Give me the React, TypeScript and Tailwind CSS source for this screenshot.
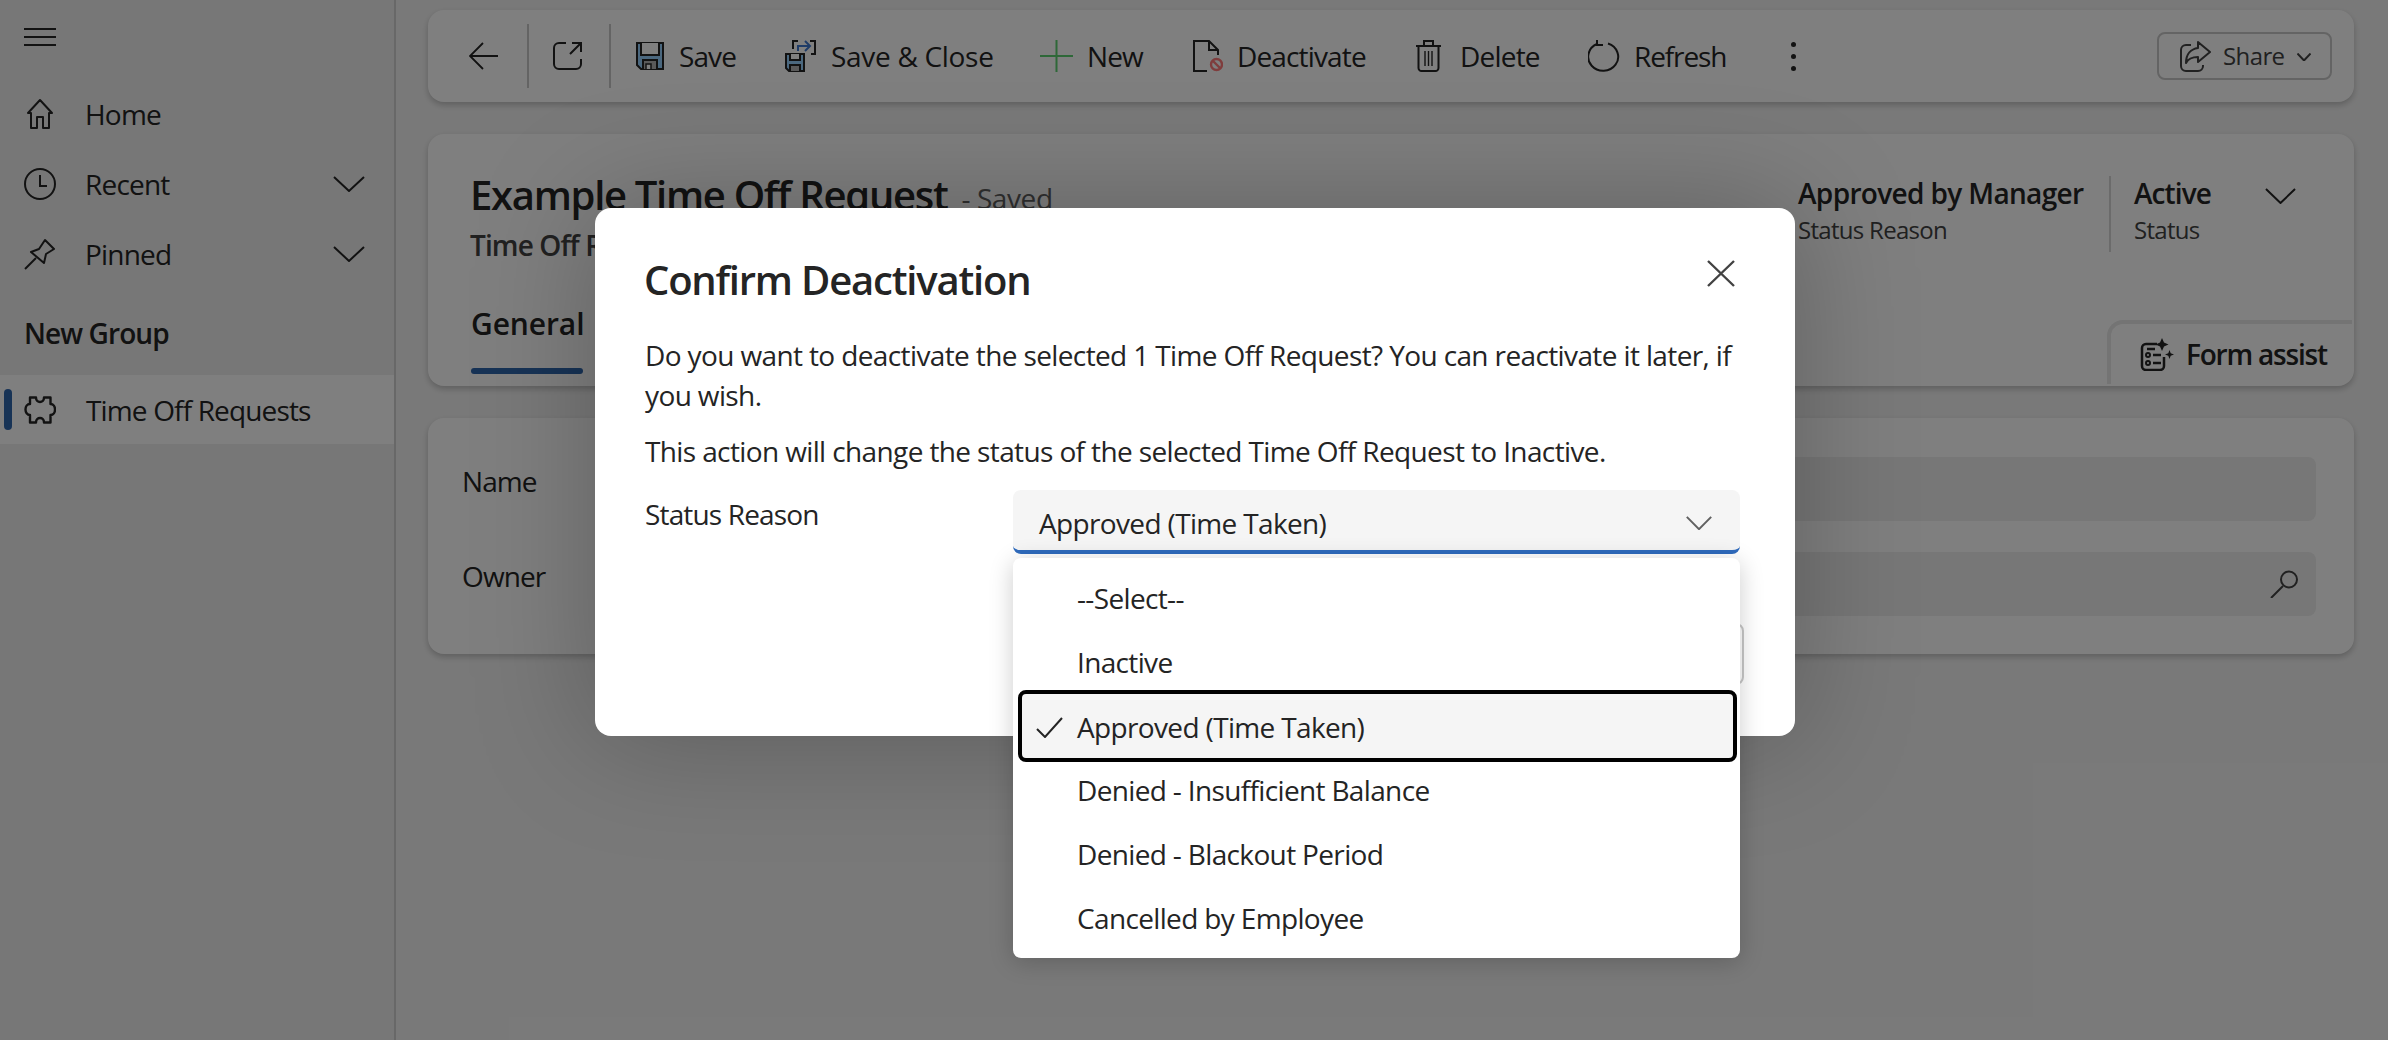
import type { ReactNode } from 'react';

const ink = '#242424';

function Chevron({ className }: { className: string }) {
  return (
    <svg viewBox="0 0 32 16" fill="none" stroke="currentColor" strokeWidth="2" preserveAspectRatio="none" className={className}>
      <path d="M1 1 16 15 31 1" vectorEffect="non-scaling-stroke" />
    </svg>
  );
}

const homeIcon = (
  <svg viewBox="0 0 32 32" fill="none" stroke={ink} strokeWidth="2" className="h-[32px] w-[32px]">
    <path d="M4 15 16 2l12 13h-3v15h-6V19h-6v11H7V15Z" strokeLinejoin="round" />
  </svg>
);
const clockIcon = (
  <svg viewBox="0 0 32 32" fill="none" stroke={ink} strokeWidth="2" className="h-[32px] w-[32px]">
    <circle cx="16" cy="16" r="15" />
    <path d="M16 7v11h7" />
  </svg>
);
const pinIcon = (
  <svg viewBox="0 0 32 32" fill="none" stroke={ink} strokeWidth="2" className="h-[32px] w-[32px]">
    <path d="M21 2 30 11 22 16 20 25 7 14l8-3 6-9Z" strokeLinejoin="round" />
    <path d="M12 20 1 31" />
  </svg>
);
const puzzleIcon = (
  <svg viewBox="0 0 32 28" fill="none" stroke={ink} strokeWidth="2.400" className="h-[28px] w-[32px]">
    <path d="M6 1.500h6c0 6 8 6 8 0h6.500V8c6 0 6 11 0 11v7.500H20c0-6-8-6-8 0H6V19c-6 0-6-11 0-11V1.500Z" strokeLinejoin="round" />
  </svg>
);

const navItems = [
  { label: 'Home', icon: homeIcon, chevron: false },
  { label: 'Recent', icon: clockIcon, chevron: true },
  { label: 'Pinned', icon: pinIcon, chevron: true },
];

const saveIcon = (
  <svg viewBox="0 0 28 28" stroke={ink} strokeWidth="2" fill="none" className="h-[28px] w-[28px]">
    <path d="M1 1h26v26H5l-4-4V1Z" fill="#97d0ff" />
    <path d="M5 1v12h18V1" fill="#ffffff" />
    <path d="M7 27V18h14v9" fill="#b4b4b4" />
    <path d="M10 27v-5h5v5" fill="#ffffff" strokeWidth="1.500" />
  </svg>
);
const saveCloseIcon = (
  <svg viewBox="0 0 31 32" stroke={ink} strokeWidth="2" fill="none" className="h-[32px] w-[31px]">
    <path d="M1 14h18v17H4l-3-3V14Z" fill="#97d0ff" />
    <path d="M5 14v6h10v-6" fill="#ffffff" />
    <path d="M5 31v-6h10v6" fill="#b4b4b4" />
    <path d="M8 9V1h5M25 1h5v13h-4" />
    <path d="M13 11V6h12M20 1l5 5-5 5" stroke="#3f78d0" />
  </svg>
);
const plusIcon = (
  <svg viewBox="0 0 33 32" stroke="#5cd070" strokeWidth="2" fill="none" className="h-[32px] w-[33px]">
    <path d="M16.500 0v32M0 16h33" />
  </svg>
);
const deactivateIcon = (
  <svg viewBox="0 0 30 32" stroke={ink} strokeWidth="2" fill="none" className="h-[32px] w-[30px]">
    <path d="M14 31H1V1h15l9 9v5M16 1v9h9" />
    <circle cx="23.500" cy="24.500" r="5.500" stroke="#ff7a7a" strokeWidth="2.400" />
    <path d="m19.500 20.500 8 8" stroke="#ff7a7a" strokeWidth="2.400" />
  </svg>
);
const deleteIcon = (
  <svg viewBox="0 0 25 32" stroke={ink} strokeWidth="2" fill="none" className="h-[32px] w-[25px]">
    <path d="M8 5V1h9v4M0 6h25M2.500 6v22a3 3 0 0 0 3 3h14a3 3 0 0 0 3-3V6" />
    <path d="M9 11v15M12.500 11v15M16 11v15" strokeWidth="1.400" />
  </svg>
);
const refreshIcon = (
  <svg viewBox="0 0 33 32" stroke={ink} strokeWidth="2" fill="none" className="h-[32px] w-[33px]">
    <path d="M20 3.500A15 14 0 1 1 9 4" />
    <path d="M9 0v5h6" />
  </svg>
);

const commands = [
  { label: 'Save', width: 'w-[58px]', ml: 'ml-[25px]', gap: 'gap-[15px]', tracking: 'tracking-[-0.9px]', icon: saveIcon },
  { label: 'Save & Close', width: 'w-[161px]', ml: 'ml-[48px]', gap: 'gap-[15px]', tracking: 'tracking-[-0.3px]', icon: saveCloseIcon },
  { label: 'New', width: 'w-[55px]', ml: 'ml-[48px]', gap: 'gap-[14px]', tracking: 'tracking-[-0.9px]', icon: plusIcon },
  { label: 'Deactivate', width: 'w-[129px]', ml: 'ml-[51px]', gap: 'gap-[14px]', tracking: 'tracking-[-0.85px]', icon: deactivateIcon },
  { label: 'Delete', width: 'w-[79px]', ml: 'ml-[50px]', gap: 'gap-[19px]', tracking: 'tracking-[-0.8px]', icon: deleteIcon },
  { label: 'Refresh', width: 'w-[91px]', ml: 'ml-[49px]', gap: 'gap-[13px]', tracking: 'tracking-[-1.1px]', icon: refreshIcon },
];

const options = ['--Select--', 'Inactive', 'Approved (Time Taken)', 'Denied - Insufficient Balance', 'Denied - Blackout Period', 'Cancelled by Employee'];

function Sidebar() {
  return (
    <aside className="flex h-full w-[396px] shrink-0 flex-col border-r-2 border-[#d0d0d0] bg-[#eeeeee]">
      <div className="pl-[24px] pt-[28px]">
        <svg viewBox="0 0 32 18" stroke={ink} strokeWidth="2" className="h-[18px] w-[32px]">
          <path d="M0 1h32M0 9h32M0 17h32" />
        </svg>
      </div>
      <nav className="mt-[48px] flex flex-col gap-[30px]">
        {navItems.map((item) => (
          <div key={item.label} className="flex h-[40px] items-center pl-[24px] pr-[29px]">
            {item.icon}
            <span className="ml-[29px] flex-1 text-[28px] leading-[40px] tracking-[-0.8px]">{item.label}</span>
            {item.chevron && <Chevron className="h-[16px] w-[32px]" />}
          </div>
        ))}
      </nav>
      <div className="mt-[39px] pl-[24px] text-[28px] font-semibold leading-[40px] tracking-[-0.9px]">New Group</div>
      <div className="mt-[22px] flex h-[69px] items-center bg-white">
        <div className="ml-[4px] h-[41px] w-[8px] rounded-full bg-[#2f66ad]" />
        <div className="ml-[12px] flex">{puzzleIcon}</div>
        <span className="ml-[30px] text-[28px] leading-[40px] tracking-[-0.85px]">Time Off Requests</span>
      </div>
    </aside>
  );
}

function CommandBar() {
  return (
    <div className="flex h-[92px] items-center rounded-[16px] bg-white pl-[41px] pr-[22px] shadow-[0_3px_6px_rgba(0,0,0,0.22)]">
      <svg viewBox="0 0 29 28" stroke={ink} strokeWidth="1.800" fill="none" className="h-[28px] w-[29px]">
        <path d="M29 14H2M14 1 1 14l13 13" />
      </svg>
      <div className="ml-[29px] h-[64px] w-[2px] bg-[#c8c8c8]" />
      <svg viewBox="0 0 30 28" stroke={ink} strokeWidth="2" fill="none" className="ml-[24px] h-[28px] w-[30px]">
        <path d="M13 1H6a5 5 0 0 0-5 5v16a5 5 0 0 0 5 5h17a5 5 0 0 0 5-5V17" />
        <path d="M17 12 28 1M19 1h9v9" />
      </svg>
      <div className="ml-[26px] h-[64px] w-[2px] bg-[#c8c8c8]" />
      {commands.map((c) => (
        <div key={c.label} className={`flex items-center ${c.ml} ${c.gap}`}>
          {c.icon}
          <span className={`${c.width} ${c.tracking} whitespace-nowrap text-[28px] leading-[40px]`}>{c.label}</span>
        </div>
      ))}
      <div className="ml-[66px] flex flex-col gap-[7px]">
        <div className="h-[5px] w-[5px] rounded-full bg-[#242424]" />
        <div className="h-[5px] w-[5px] rounded-full bg-[#242424]" />
        <div className="h-[5px] w-[5px] rounded-full bg-[#242424]" />
      </div>
      <div className="ml-auto flex h-[48px] w-[175px] items-center rounded-[8px] border-2 border-[#c8c8c8] pl-[21px] text-[#424242]">
        <svg viewBox="0 0 31 32" stroke="#424242" strokeWidth="2" fill="none" className="h-[32px] w-[31px]">
          <path d="M11 5H6a5 5 0 0 0-5 5v16a5 5 0 0 0 5 5h12a5 5 0 0 0 5-5v-1" />
          <path d="M18 2 30 12 18 22v-5c-6 0-10 2-12 6 0-9 5-14 12-15V2Z" strokeLinejoin="round" />
        </svg>
        <span className="ml-[12px] text-[24px] leading-[32px] tracking-[-0.6px]">Share</span>
        <Chevron className="ml-[12px] mt-[2px] h-[8px] w-[14px]" />
      </div>
    </div>
  );
}

function HeaderCard() {
  return (
    <div className="flex h-[252px] justify-between rounded-[16px] bg-white pl-[42px] shadow-[0_3px_6px_rgba(0,0,0,0.22)]">
      <div className="pt-[35px]">
        <div className="flex items-baseline whitespace-nowrap">
          <span className="text-[40px] font-semibold leading-[52px] tracking-[-1.3px]">Example Time Off Request</span>
          <span className="ml-[14px] -translate-y-[1px] text-[28px] tracking-[-0.4px] text-[#616161]">- Saved</span>
        </div>
        <div className="mt-[4px] text-[28px] font-semibold leading-[40px] tracking-[-0.9px] text-[#424242]">Time Off Request</div>
        <div className="ml-[1px] mt-[39px] text-[30px] font-semibold leading-[40px] tracking-[-0.1px]">General</div>
        <div className="ml-[1px] mt-[24px] h-[6px] w-[112px] rounded-full bg-[#2f66ad]" />
      </div>
      <div className="flex flex-col items-end justify-between pb-[2px] pr-[2px] pt-[40px]">
        <div className="mr-[56px] flex items-start">
          <div className="w-[284px] whitespace-nowrap">
            <div className="text-[28px] font-semibold leading-[38px] tracking-[-0.65px]">Approved by Manager</div>
            <div className="text-[24px] leading-[36px] tracking-[-0.7px] text-[#424242]">Status Reason</div>
          </div>
          <div className="ml-[27px] mt-[2px] h-[76px] w-[2px] bg-[#d6d6d6]" />
          <div className="ml-[23px] w-[131px]">
            <div className="text-[28px] font-semibold leading-[38px] tracking-[-0.9px]">Active</div>
            <div className="text-[24px] leading-[36px] tracking-[-0.7px] text-[#424242]">Status</div>
          </div>
          <Chevron className="mt-[14px] h-[16px] w-[31px]" />
        </div>
        <div className="flex h-[64px] w-[245px] items-center rounded-tl-[16px] border-l-4 border-t-4 border-[#e8e8e8] pl-[29px]">
          <svg viewBox="0 0 34 33" stroke={ink} strokeWidth="2.500" fill="none" className="h-[33px] w-[34px]">
            <path d="M17 6H6a4 4 0 0 0-4 4v18a4 4 0 0 0 4 4h14a4 4 0 0 0 4-4V19" />
            <circle cx="8" cy="17" r="2" strokeWidth="2" />
            <circle cx="8" cy="25" r="2" strokeWidth="2" />
            <path d="M13 17h8M13 25h8M7 11h8" />
            <path d="M22 0l2 4.500 4.500 2-4.500 2-2 4.500-2-4.500-4.500-2 4.500-2 2-4.500ZM29.500 12l1.200 3.300 3.300 1.200-3.300 1.200-1.200 3.300-1.200-3.300-3.300-1.200 3.300-1.200 1.200-3.300Z" fill={ink} stroke="none" />
          </svg>
          <span className="ml-[12px] whitespace-nowrap text-[28px] font-semibold leading-[40px] tracking-[-1.2px]">Form assist</span>
        </div>
      </div>
    </div>
  );
}

function FormRow({ label, children }: { label: string; children?: ReactNode }) {
  return (
    <div className="flex">
      <span className="mt-[4px] w-[337px] text-[28px] leading-[40px] tracking-[-0.9px]">{label}</span>
      <div className="flex h-[64px] flex-1 items-center justify-end rounded-[8px] bg-[#eeeeee] pr-[18px]">{children}</div>
    </div>
  );
}

function FormCard() {
  return (
    <div className="flex h-[236px] flex-col gap-[31px] rounded-[16px] bg-white pl-[34px] pr-[38px] pt-[39px] shadow-[0_3px_6px_rgba(0,0,0,0.22)]">
      <FormRow label="Name" />
      <FormRow label="Owner">
        <svg viewBox="0 0 28 28" stroke="#424242" strokeWidth="2" fill="none" className="h-[28px] w-[28px]">
          <circle cx="19" cy="9.500" r="8" />
          <path d="M13 16 1 28" />
        </svg>
      </FormRow>
    </div>
  );
}

function StatusDropdown() {
  return (
    <div className="absolute left-[418px] top-[350px] h-[400px] w-[727px] rounded-[8px] bg-white pl-[5px] pr-[3px] pt-[8px] shadow-[0_4px_24px_rgba(0,0,0,0.2)]">
      {options.map((option, i) =>
        i === 2 ? (
          <div key={option} className="relative z-10 -my-[4px] flex h-[72px] items-center rounded-[8px] border-4 border-black bg-[#f5f5f5] pl-[14px] pt-[2px]">
            <svg viewBox="0 0 27 21" stroke={ink} strokeWidth="2" fill="none" className="h-[21px] w-[27px]">
              <path d="M1 12l8 8L26 1" />
            </svg>
            <span className="ml-[14px] text-[28px] leading-[40px] tracking-[-0.65px]">{option}</span>
          </div>
        ) : (
          <div key={option} className="flex h-[64px] items-center pl-[59px] text-[28px] leading-[40px] tracking-[-0.65px]">
            {option}
          </div>
        ),
      )}
    </div>
  );
}

function ConfirmDialog() {
  return (
    <div className="absolute left-[595px] top-[208px] h-[528px] w-[1200px] rounded-[16px] bg-white pl-[50px] pr-[51px] pt-[46px] shadow-[0_0_120px_rgba(0,0,0,0.25)]">
      <div className="flex items-start justify-between">
        <h2 className="-ml-[1px] text-[40px] font-semibold leading-[52px] tracking-[-1.2px]">Confirm Deactivation</h2>
        <svg viewBox="0 0 28 27" stroke="#424242" strokeWidth="2.400" fill="none" className="mr-[9px] mt-[6px] h-[27px] w-[28px]">
          <path d="M1 1l26 25M27 1 1 26" />
        </svg>
      </div>
      <p className="mt-[29px] text-[28px] leading-[40px] tracking-[-0.62px]">
        Do you want to deactivate the selected 1 Time Off Request? You can reactivate it later, if you wish.
      </p>
      <p className="mt-[16px] text-[28px] leading-[40px] tracking-[-0.62px]">
        This action will change the status of the selected Time Off Request to Inactive.
      </p>
      <div className="mt-[19px] flex items-start">
        <span className="mt-[4px] w-[368px] text-[28px] leading-[40px] tracking-[-0.85px]">Status Reason</span>
        <div className="flex h-[64px] w-[727px] items-center justify-between rounded-[8px] border-b-4 border-[#2f6bbd] bg-[#f5f5f5] pl-[26px] pr-[28px] pt-[5px]">
          <span className="text-[28px] leading-[40px] tracking-[-0.65px]">Approved (Time Taken)</span>
          <Chevron className="h-[14px] w-[26px] text-[#616161]" />
        </div>
      </div>
      <div className="mt-[69px] flex justify-end gap-[16px]">
        <button className="h-[62px] rounded-[8px] bg-[#0f6cbd] px-[32px] text-[28px] font-semibold text-white">Deactivate</button>
        <button className="h-[62px] rounded-[8px] border-2 border-[#c8c8c8] bg-white px-[32px] text-[28px] font-semibold">Cancel</button>
      </div>
      <StatusDropdown />
    </div>
  );
}

export default function App() {
  return (
    <div className="relative flex h-[1040px] w-[2388px] overflow-hidden bg-[#f3f3f3] font-['Open_Sans',sans-serif] text-[#242424]">
      <Sidebar />
      <main className="flex flex-1 flex-col gap-[32px] pl-[32px] pr-[34px] pt-[10px]">
        <CommandBar />
        <HeaderCard />
        <FormCard />
      </main>
      <div className="absolute inset-0 bg-black/50" />
      <ConfirmDialog />
    </div>
  );
}
